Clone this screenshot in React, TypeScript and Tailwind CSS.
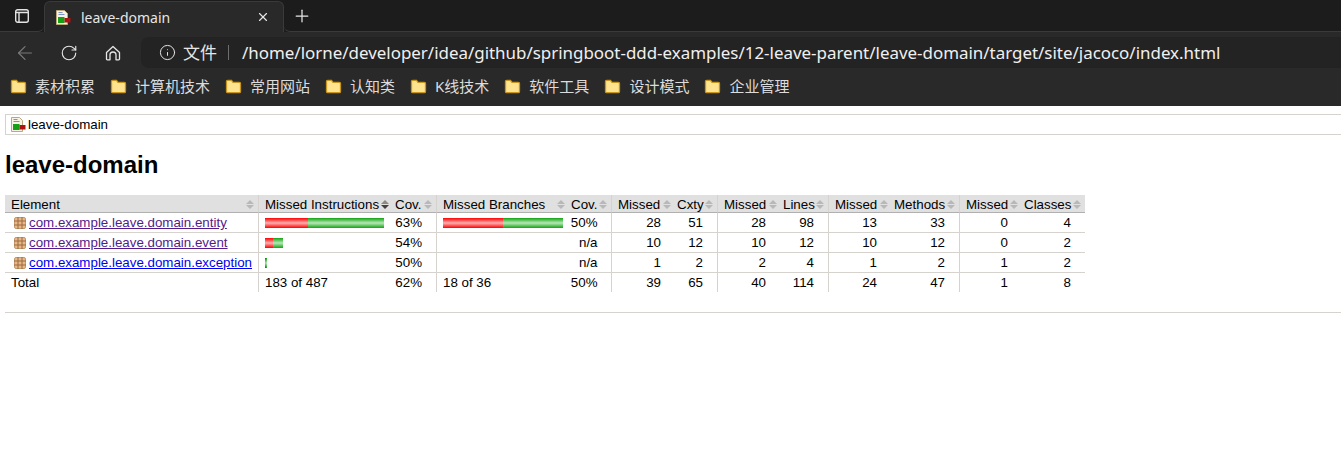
import { ArrowLeft, Info, Plus, RotateCw, X } from "lucide-react";

const BROWSER_FONT = "font-['Noto_Sans','Noto_Sans_CJK_SC',sans-serif]";

const bookmarks = ["素材积累", "计算机技术", "常用网站", "认知类", "K线技术", "软件工具", "设计模式", "企业管理"];

type Row = {
  name: string;
  visited: boolean;
  bar1: [number, number];
  cov1: string;
  bar2?: [number, number];
  cov2: string;
  nums: string[];
};

const rows: Row[] = [
  { name: "com.example.leave.domain.entity", visited: true, bar1: [43, 76], cov1: "63%", bar2: [60, 60], cov2: "50%", nums: ["28", "51", "28", "98", "13", "33", "0", "4"] },
  { name: "com.example.leave.domain.event", visited: true, bar1: [8, 10], cov1: "54%", cov2: "n/a", nums: ["10", "12", "10", "12", "10", "12", "0", "2"] },
  { name: "com.example.leave.domain.exception", visited: false, bar1: [1, 1], cov1: "50%", cov2: "n/a", nums: ["1", "2", "2", "4", "1", "2", "1", "2"] },
];

const numHeaders = ["Missed", "Cxty", "Missed", "Lines", "Missed", "Methods", "Missed", "Classes"];
const totals = ["39", "65", "40", "114", "24", "47", "1", "8"];
const colWidths = [253, 131, 47, 129, 46, 60, 46, 60, 51, 60, 71, 59, 67];
const numPads = ["pr-[10px]", "pr-[14px]", "pr-[11px]", "pr-[14px]", "pr-[11px]", "pr-[14px]", "pr-[10px]", "pr-[14px]"];

const Folder = () => (
  <svg width="17" height="15" viewBox="0 0 17 15" className="shrink-0">
    <path d="M1.500 2.500C1.500 1.800 2 1.300 2.700 1.300H6.500L8 3.300h6.300c.7 0 1.200.5 1.200 1.200v8c0 .7-.5 1.200-1.200 1.200H2.700c-.7 0-1.200-.5-1.200-1.200Z" fill="#ffe38f" stroke="#c8961e" strokeWidth="1.300" />
  </svg>
);

const SortIcon = ({ down, flush }: { down?: boolean; flush?: boolean }) => (
  <svg width="8" height="9" viewBox="0 0 8 9" className={`absolute top-[5px] ${flush ? "right-0" : "right-[4px]"}`}>
    <path d="M4 0 8 4H0Z" fill={down ? "#8c8884" : "#b8b8b8"} />
    <path d="M4 9 8 5H0Z" fill={down ? "#45403c" : "#b8b8b8"} />
  </svg>
);

const ReportIcon = () => (
  <svg width="15" height="15" viewBox="0 0 15 15" className="shrink-0">
    <path d="M.5.5h8L11.500 3.500v11H.5Z" fill="#f6f3e6" stroke="#bda77c" />
    <path d="M2.500 2.500h4M2.500 4.500h6" stroke="#7d93c5" />
    <rect x="2" y="7" width="6.500" height="6" fill="#16a016" />
    <rect x="8.500" y="8" width="6" height="4.500" fill="#b01212" />
  </svg>
);

const PackageIcon = () => (
  <svg width="12" height="12" viewBox="0 0 12 12" className="ml-px mr-[3px] shrink-0">
    <rect x=".5" y=".5" width="11" height="11" rx="1.500" fill="#e8b888" stroke="#c4986e" />
    <path d="M4 0v12M8 0v12M0 4h12M0 8h12" stroke="#9c6a40" strokeWidth="1" />
  </svg>
);

const Bar = ({ red, green }: { red: number; green: number }) => (
  <div className="flex h-[10px]">
    <div style={{ width: red }} className="bg-[linear-gradient(#ff0000,#ffb0b0_50%,#ff0000)]" />
    <div style={{ width: green }} className="bg-[linear-gradient(#12a312,#b8e8b8_50%,#12a312)]" />
  </div>
);

const leftBorder = (i: number) => (i % 2 === 0 ? "border-l border-[#d6d3ce]" : "");

export default function App() {
  return (
    <div className="min-h-[449px] overflow-hidden bg-white font-['Liberation_Sans',Arial,sans-serif] text-[13.33px] leading-[15px] text-black">
      <div className={`${BROWSER_FONT} bg-[#292929] text-[#e6e6e6]`}>
        <div className="flex h-[32px] items-end bg-[#1c1c1c]">
          <div className="flex h-[32px] w-[44px] items-center justify-center rounded-br-[6px] border-b border-[#3a3a3a]">
            <svg width="14" height="14" viewBox="0 0 14 14" fill="none" stroke="#e4e4e4" strokeWidth="1.400">
              <rect x=".7" y=".7" width="12.600" height="12.600" rx="2" />
              <path d="M.7 3.500h12.600M4 3.500v9.800" />
            </svg>
          </div>
          <div className="flex h-[31px] w-[240px] items-center rounded-t-[6px] border border-b-0 border-[#3a3a3a] bg-[#292929] pl-[11px] pr-[13px]">
            <ReportIcon />
            <span className="ml-[10px] flex-1 text-[14px]">leave-domain</span>
            <X size={14} strokeWidth={2} />
          </div>
          <div className="flex h-[32px] flex-1 items-center rounded-bl-[6px] border-b border-[#3a3a3a] pl-[8px]">
            <Plus size={20} strokeWidth={1.500} />
          </div>
        </div>
        <div className="flex h-[37px] items-center pt-[4px]">
          <ArrowLeft size={22} strokeWidth={1.300} className="ml-[14px] text-[#7a7a7a]" />
          <RotateCw size={18} strokeWidth={1.500} className="ml-[24px]" />
          <svg width="16" height="16" viewBox="0 0 16 16" fill="none" stroke="#e6e6e6" strokeWidth="1.300" strokeLinejoin="round" className="ml-[27px]">
            <path d="M1.500 7.500 8 1.500l6.500 6V14a.8.8 0 0 1-.8.8h-2.700V10a3 3 0 0 0-6 0v4.800H2.300a.8.8 0 0 1-.8-.8Z" />
          </svg>
          <div className="ml-[20px] flex h-[31px] flex-1 items-center rounded-l-[8px] bg-[#232323] pl-[18px]">
            <Info size={17} strokeWidth={1.400} />
            <span className="ml-[7px] text-[17px]">文件</span>
            <span className="ml-[11px] h-[15px] w-px bg-[#6e6e6e]" />
            <span className="ml-[13px] whitespace-nowrap text-[16.93px] text-[#f0f0f0]">
              /home/lorne/developer/idea/github/springboot-ddd-examples/12-leave-parent/leave-domain/target/site/jacoco/index.html
            </span>
          </div>
        </div>
        <div className="flex h-[37px] items-center gap-[15px] pb-[2px] pl-[10px] text-[15px] text-[#dcdcdc]">
          {bookmarks.map((b) => (
            <div key={b} className="flex items-center gap-[8px]">
              <Folder />
              <span>{b}</span>
            </div>
          ))}
        </div>
      </div>

      <div className="pl-[5px] pt-[8px]">
        <div className="flex h-[21px] items-center border border-r-0 border-[#d6d3ce] pl-[5px]">
          <ReportIcon />
          <span className="ml-[2px]">leave-domain</span>
        </div>
        <h1 className="mb-[16px] mt-[16px] text-[24px] font-bold leading-[28px]">leave-domain</h1>

        <table className="w-[1080px] table-fixed border-separate border-spacing-0">
          <colgroup>
            {colWidths.map((w, i) => (
              <col key={i} style={{ width: w }} />
            ))}
          </colgroup>
          <thead>
            <tr>
              <td className="relative h-[18px] border-b border-[#b0b0b0] bg-[#e0e0e0] pl-[6px] pt-[2px] align-top">
                Element
                <SortIcon />
              </td>
              <td className="relative whitespace-nowrap border-b border-l border-[#b0b0b0] border-l-[#d6d3ce] bg-[#e0e0e0] pl-[6px] pt-[2px] align-top">
                Missed Instructions
                <SortIcon down flush />
              </td>
              <td className="relative border-b border-[#b0b0b0] bg-[#e0e0e0] pl-[6px] pt-[2px] align-top">
                Cov.
                <SortIcon />
              </td>
              <td className="relative whitespace-nowrap border-b border-l border-[#b0b0b0] border-l-[#d6d3ce] bg-[#e0e0e0] pl-[6px] pt-[2px] align-top">
                Missed Branches
                <SortIcon flush />
              </td>
              <td className="relative border-b border-[#b0b0b0] bg-[#e0e0e0] pl-[6px] pt-[2px] align-top">
                Cov.
                <SortIcon />
              </td>
              {numHeaders.map((h, i) => (
                <td key={i} className={`relative whitespace-nowrap border-b border-[#b0b0b0] bg-[#e0e0e0] pl-[6px] pt-[2px] align-top ${i % 2 === 0 ? "border-l border-l-[#d6d3ce]" : ""}`}>
                  {h}
                  <SortIcon flush={i % 2 === 0} />
                </td>
              ))}
            </tr>
          </thead>
          <tbody>
            {rows.map((r) => (
              <tr key={r.name} className="h-[20px]">
                <td className="whitespace-nowrap border-b border-[#d6d3ce] pl-[8px] align-middle">
                  <div className="flex items-center">
                    <PackageIcon />
                    <a href="#" className={`underline ${r.visited ? "text-[#551a8b]" : "text-[#0000ee]"}`}>
                      {r.name}
                    </a>
                  </div>
                </td>
                <td className="border-b border-l border-[#d6d3ce] pl-[6px]">
                  <Bar red={r.bar1[0]} green={r.bar1[1]} />
                </td>
                <td className="border-b border-[#d6d3ce] pr-[14px] text-right">{r.cov1}</td>
                <td className="border-b border-l border-[#d6d3ce] pl-[6px]">
                  {r.bar2 && <Bar red={r.bar2[0]} green={r.bar2[1]} />}
                </td>
                <td className="border-b border-[#d6d3ce] pr-[13.5px] text-right">{r.cov2}</td>
                {r.nums.map((n, i) => (
                  <td key={i} className={`border-b border-[#d6d3ce] text-right ${leftBorder(i)} ${numPads[i]}`}>
                    {n}
                  </td>
                ))}
              </tr>
            ))}
          </tbody>
          <tfoot>
            <tr className="h-[19px]">
              <td className="pl-[6px]">Total</td>
              <td className="border-l border-[#d6d3ce] pl-[6px]">183 of 487</td>
              <td className="pr-[14px] text-right">62%</td>
              <td className="border-l border-[#d6d3ce] pl-[6px]">18 of 36</td>
              <td className="pr-[13.5px] text-right">50%</td>
              {totals.map((n, i) => (
                <td key={i} className={`text-right ${leftBorder(i)} ${numPads[i]}`}>
                  {n}
                </td>
              ))}
            </tr>
          </tfoot>
        </table>

        <div className="mt-[20px] border-t border-[#d6d3ce]" />
      </div>
    </div>
  );
}
